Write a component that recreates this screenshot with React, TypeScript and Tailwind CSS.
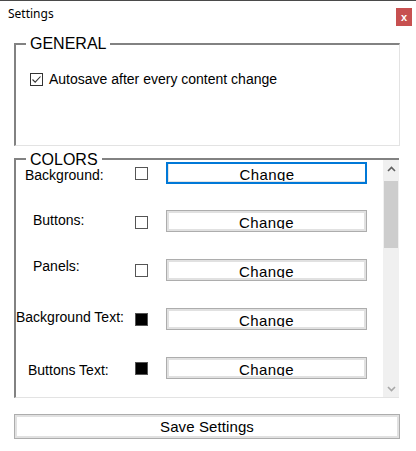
import React from "react";

type Row = {
  label: string;
  dark: boolean;
  focused?: boolean;
  h: string;
  labelPos: string;
  boxTop: string;
};

const rows: Row[] = [
  { label: "Background:", dark: false, focused: true, h: "h-[48px]", labelPos: "pl-[9px] mt-[5px]", boxTop: "mt-[5px]" },
  { label: "Buttons:", dark: false, h: "h-[49px]", labelPos: "pl-[17px] mt-[2px]", boxTop: "mt-[6px]" },
  { label: "Panels:", dark: false, h: "h-[49px]", labelPos: "pl-[17px] -mt-[1px]", boxTop: "mt-[5px]" },
  { label: "Background Text:", dark: true, h: "h-[49px]", labelPos: "pl-0 mt-[1px]", boxTop: "mt-[5px]" },
  { label: "Buttons Text:", dark: true, h: "h-[49px]", labelPos: "pl-[12px] mt-[5px]", boxTop: "mt-[5px]" },
];

function ChangeButton({ focused }: { focused?: boolean }) {
  if (focused) {
    return (
      <div className="w-[201px] h-[22px] border-2 border-[#0078d7] bg-white">
        <div className="h-full border-l border-b border-[#e3e3e3] overflow-hidden text-center">
          <span className="block pt-[3px] text-[15px] leading-[16px] tracking-[0.4px] text-black">Change</span>
        </div>
      </div>
    );
  }
  return (
    <div className="w-[201px] h-[22px] border border-[#adadad] bg-white">
      <div className="h-full border-2 border-[#e1e1e1] overflow-hidden text-center">
        <span className="block pt-[2px] text-[15px] leading-[16px] tracking-[0.4px] text-black">Change</span>
      </div>
    </div>
  );
}

function Chevron({ up, color }: { up?: boolean; color: string }) {
  return (
    <svg width="9" height="6" viewBox="0 0 9 6">
      <polyline
        points={up ? "1,5 4.5,1.5 8,5" : "1,1 4.5,4.5 8,1"}
        fill="none"
        stroke={color}
        strokeWidth="1.6"
      />
    </svg>
  );
}

export default function App() {
  return (
    <div
      className="w-[416px] h-[451px] bg-white overflow-hidden text-black"
      style={{ fontFamily: '"Liberation Sans", Arial, sans-serif' }}
    >
      {/* TITLE BAR */}
      <div className="h-[34px] flex justify-between items-start border-t border-[#4a4a4a]">
        <span
          className="ml-[8px] mt-[5px] text-[12px] leading-[16px]"
          style={{ fontFamily: '"Noto Sans", sans-serif' }}
        >
          Settings
        </span>
        <div className="mt-[7px] mr-[4px] w-[16px] h-[18px] bg-[#c75050] flex items-center justify-center text-white text-[11px] font-bold leading-none">
          x
        </div>
      </div>

      {/* GENERAL */}
      <div className="relative mt-[9px] ml-[14px] w-[386px] h-[103px] border-t-2 border-l-2 border-r border-b border-t-[#828282] border-l-[#828282] border-r-[#e3e3e3] border-b-[#e3e3e3]">
        <span className="absolute left-[10px] -top-[10px] px-[4px] bg-white text-[16px] leading-[18px]">GENERAL</span>
        <div className="flex items-center pl-[14px] pt-[26px]">
          <svg width="13" height="13" viewBox="0 0 13 13">
            <rect x="0.5" y="0.5" width="12" height="12" fill="white" stroke="#333" />
            <polyline points="2.5,6.5 5.2,9.2 10.5,3.5" fill="none" stroke="#333" strokeWidth="1.1" />
          </svg>
          <span className="ml-[6px] text-[14px] leading-[16px]">Autosave after every content change</span>
        </div>
      </div>

      {/* COLORS */}
      <div className="relative mt-[12px] ml-[14px] w-[385px] h-[240px] border-t-2 border-l-2 border-b border-t-[#828282] border-l-[#828282] border-b-[#e3e3e3] flex">
        <span className="absolute left-[10px] -top-[9px] px-[4px] bg-white text-[16px] leading-[18px] z-10">COLORS</span>
        <div className="flex-1 overflow-hidden pt-[2px]">
          {rows.map((r) => (
            <div key={r.label} className={`flex items-start ${r.h}`}>
              <div className="w-[119px] shrink-0">
                <div className={`text-[14px] leading-[16px] whitespace-nowrap ${r.labelPos}`}>{r.label}</div>
              </div>
              <div
                className={`${r.boxTop} w-[13px] h-[13px] shrink-0 border border-[#555] ${
                  r.dark ? "bg-black" : "bg-white"
                }`}
              />
              <div className="ml-[18px]">
                <ChangeButton focused={r.focused} />
              </div>
            </div>
          ))}
        </div>
        {/* scrollbar */}
        <div className="w-[16px] h-full bg-[#f0f0f0] flex flex-col">
          <div className="h-[17px] flex items-center justify-center">
            <Chevron up color="#606060" />
          </div>
          <div className="mt-[4px] mx-[1px] h-[67px] bg-[#cdcdcd]" />
          <div className="flex-1" />
          <div className="h-[17px] flex items-center justify-center">
            <Chevron color="#a8a8a8" />
          </div>
        </div>
      </div>

      {/* SAVE */}
      <div className="mt-[16px] ml-[14px] w-[386px] h-[25px] border border-[#adadad] bg-white">
        <div className="h-full border-2 border-[#e1e1e1] flex items-center justify-center">
          <span className="text-[15px] leading-[16px] tracking-[0.1px]">Save Settings</span>
        </div>
      </div>
    </div>
  );
}
